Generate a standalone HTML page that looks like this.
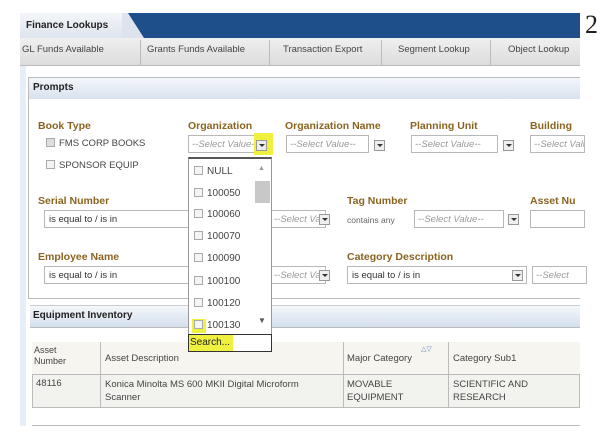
<!DOCTYPE html>
<html><head><meta charset="utf-8"><style>
*{margin:0;padding:0;box-sizing:border-box}
body{width:603px;height:442px;background:#fff;font-family:"Liberation Sans",sans-serif;position:relative;overflow:hidden;font-size:10px;color:#333}
.a{position:absolute;white-space:nowrap}
.lbl{position:absolute;color:#8a6420;font-weight:bold;font-size:10.5px;white-space:nowrap}
.box{position:absolute;border:1px solid #b8b8b8;background:#fff;height:18px;font-size:9.5px;color:#999;font-style:italic;padding:3px 3px;white-space:nowrap;overflow:hidden}
.inp{position:absolute;border:1px solid #b8b8b8;background:#fff;height:18px;font-size:9.5px;color:#333;padding:3px 4px;white-space:nowrap;overflow:hidden}
.btn{position:absolute;width:11px;height:11px;border:1px solid #999;background:#eee}
.btn:after{content:"";position:absolute;left:2px;top:3px;border:3px solid transparent;border-top:3px solid #333}
.cb{display:inline-block;width:9px;height:9px;border:1px solid #aaa;background:#f4f4f4;vertical-align:-1px;margin-right:4px}
.tab{position:absolute;top:44px;font-size:9.5px;color:#444}
.sep{position:absolute;top:40px;width:1px;height:26px;background:#bbb}
.li{position:absolute;left:194px;font-size:10px;color:#444}
</style></head><body>
<div class="a" style="left:20px;top:13px;width:560px;height:25px;background:#1f4f8a"></div>
<div class="a" style="left:20px;top:13px;width:103px;height:25px;background:linear-gradient(#f4f6f9,#dde4ee)"></div>
<svg class="a" style="left:122px;top:13px" width="22" height="25"><polygon points="0,0 6,0 22,25 0,25" fill="#dde4ee"/></svg>
<div class="a" style="left:26px;top:20px;font-weight:bold;font-size:10px;color:#222">Finance Lookups</div>
<div class="a" style="left:20px;top:38px;width:560px;height:28px;background:linear-gradient(#f0f0f0,#dcdcdc);border-bottom:1px solid #bbb"></div>
<div class="tab" style="left:22px">GL Funds Available</div>
<div class="sep" style="left:140px"></div>
<div class="tab" style="left:147px">Grants Funds Available</div>
<div class="sep" style="left:269px"></div>
<div class="tab" style="left:283px">Transaction Export</div>
<div class="sep" style="left:381px"></div>
<div class="tab" style="left:398px">Segment Lookup</div>
<div class="sep" style="left:490px"></div>
<div class="tab" style="left:508px">Object Lookup</div>
<div class="a" style="left:20px;top:66px;width:6px;height:360px;background:#e6eef7"></div>
<div class="a" style="left:28px;top:77px;width:552px;height:222px;border:1px solid #bbb;border-right:none"></div>
<div class="a" style="left:29px;top:78px;width:551px;height:21px;background:linear-gradient(#f4f7fb,#d8e2ee)"></div>
<div class="a" style="left:33px;top:82px;font-weight:bold;font-size:10px;color:#222">Prompts</div>
<div class="lbl" style="left:38px;top:120px">Book Type</div>
<div class="a" style="left:46px;top:138px;font-size:9.5px;color:#444"><span class="cb" style="background:#ddd"></span>FMS CORP BOOKS</div>
<div class="a" style="left:46px;top:160px;font-size:9.5px;color:#444"><span class="cb"></span>SPONSOR EQUIP</div>
<div class="lbl" style="left:188px;top:120px">Organization</div>
<div class="box" style="left:188px;top:135px;width:68px">--Select Value--</div>
<div class="a" style="left:254px;top:133px;width:19px;height:22px;background:#f0f040"></div>
<div class="btn" style="left:256px;top:140px"></div>
<div class="lbl" style="left:285px;top:120px">Organization Name</div>
<div class="box" style="left:286px;top:135px;width:83px">--Select Value--</div>
<div class="btn" style="left:374px;top:140px"></div>
<div class="lbl" style="left:410px;top:120px">Planning Unit</div>
<div class="box" style="left:411px;top:135px;width:87px">--Select Value--</div>
<div class="btn" style="left:503px;top:140px"></div>
<div class="lbl" style="left:530px;top:120px">Building</div>
<div class="box" style="left:530px;top:135px;width:55px">--Select Value</div>
<div class="lbl" style="left:38px;top:195px">Serial Number</div>
<div class="inp" style="left:44px;top:210px;width:230px">is equal to / is in</div>
<div class="box" style="left:270px;top:210px;width:56px">--Select Value--</div>
<div class="btn" style="left:319px;top:214px"></div>
<div class="lbl" style="left:347px;top:195px">Tag Number</div>
<div class="a" style="left:347px;top:215px;font-size:8.5px;color:#666">contains any</div>
<div class="box" style="left:414px;top:210px;width:90px">--Select Value--</div>
<div class="btn" style="left:508px;top:214px"></div>
<div class="lbl" style="left:530px;top:195px">Asset Nu</div>
<div class="inp" style="left:530px;top:210px;width:55px"></div>
<div class="lbl" style="left:38px;top:251px">Employee Name</div>
<div class="inp" style="left:44px;top:266px;width:230px">is equal to / is in</div>
<div class="box" style="left:270px;top:266px;width:56px">--Select Value--</div>
<div class="btn" style="left:319px;top:270px"></div>
<div class="lbl" style="left:347px;top:251px">Category Description</div>
<div class="inp" style="left:347px;top:266px;width:180px">is equal to / is in</div>
<div class="btn" style="left:512px;top:270px"></div>
<div class="box" style="left:532px;top:266px;width:55px">--Select</div>
<div class="a" style="left:30px;top:305px;width:550px;height:23px;background:linear-gradient(#f4f7fb,#d4dfec);border-top:1px solid #ccc;border-bottom:1px solid #bbb"></div>
<div class="a" style="left:33px;top:310px;font-weight:bold;font-size:10px;color:#222">Equipment Inventory</div>
<div class="a" style="left:32px;top:342px;width:548px;height:66px;border:1px solid #bbb;background:#f2f2ee"></div>
<div class="a" style="left:32px;top:342px;width:548px;height:33px;border-bottom:1px solid #bbb;background:#f6f5ef"></div>
<div class="a" style="left:100px;top:342px;width:1px;height:66px;background:#bbb"></div>
<div class="a" style="left:343px;top:342px;width:1px;height:66px;background:#bbb"></div>
<div class="a" style="left:448px;top:342px;width:1px;height:66px;background:#bbb"></div>
<div class="a" style="left:34px;top:345px;font-size:9px;color:#444;line-height:11px">Asset<br>Number</div>
<div class="a" style="left:105px;top:353px;font-size:9.5px;color:#444">Asset Description</div>
<div class="a" style="left:347px;top:353px;font-size:9.5px;color:#444">Major Category</div>
<div class="a" style="left:421px;top:345px;font-size:7px;color:#6688bb">△▽</div>
<div class="a" style="left:453px;top:353px;font-size:9.5px;color:#444">Category Sub1</div>
<div class="a" style="left:36px;top:378px;font-size:9.5px;color:#444">48116</div>
<div class="a" style="left:105px;top:378px;font-size:9.5px;color:#444;line-height:13px">Konica Minolta MS 600 MKII Digital Microform<br>Scanner</div>
<div class="a" style="left:347px;top:378px;font-size:9.5px;color:#444;line-height:13px">MOVABLE<br>EQUIPMENT</div>
<div class="a" style="left:453px;top:378px;font-size:9.5px;color:#444;line-height:13px">SCIENTIFIC AND<br>RESEARCH</div>
<div class="a" style="left:32px;top:425px;width:548px;height:1px;background:#bbb"></div>
<div class="a" style="left:188px;top:157px;width:84px;height:178px;background:#fff;border:1px solid #999;border-top:2px solid #555"></div>
<div class="a" style="left:255px;top:181px;width:15px;height:22px;background:#c8c8c8"></div>
<div class="a" style="left:258px;top:165px;font-size:7px;color:#999">▲</div>
<div class="a" style="left:258px;top:316px;font-size:8px;color:#555">▼</div>
<div class="li" style="top:166px"><span class="cb"></span>NULL</div>
<div class="li" style="top:188px"><span class="cb"></span>100050</div>
<div class="li" style="top:209px"><span class="cb"></span>100060</div>
<div class="li" style="top:231px"><span class="cb"></span>100070</div>
<div class="li" style="top:253px"><span class="cb"></span>100090</div>
<div class="li" style="top:276px"><span class="cb"></span>100100</div>
<div class="li" style="top:298px"><span class="cb"></span>100120</div>
<div class="a" style="left:192px;top:319px;width:14px;height:14px;background:#f0f040"></div>
<div class="li" style="top:320px"><span class="cb"></span>100130</div>
<div class="a" style="left:188px;top:334px;width:84px;height:18px;border:1px solid #333;background:#fff"></div>
<div class="a" style="left:189px;top:335px;width:44px;height:16px;background:#f0f040"></div>
<div class="a" style="left:190px;top:337px;font-size:10px;color:#222">Search...</div>
<div class="a" style="left:585px;top:10px;font-family:'Liberation Serif',serif;font-size:26px;color:#222">2</div>
</body></html>
